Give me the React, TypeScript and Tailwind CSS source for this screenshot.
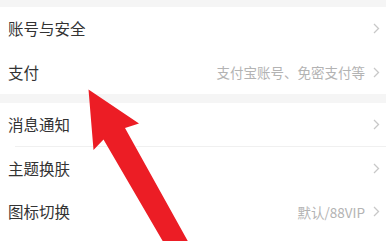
import React from "react";

const Chevron = () => (
  <svg width="7" height="11" viewBox="0 0 7 11" className="shrink-0">
    <path d="M1 1 L5.5 5.5 L1 10" fill="none" stroke="#c8c8c8" strokeWidth="1.3" />
  </svg>
);

type RowProps = { title: string; sub?: string; line?: boolean };

const Row = ({ title, sub, line }: RowProps) => (
  <div className="relative flex h-[43.5px] items-center pl-[8px] pr-[6px]">
    <span className="flex-1 text-[15.5px] text-[#333333]">{title}</span>
    {sub && <span className="mr-[8px] text-[13.5px] text-[#b3b3b3]">{sub}</span>}
    <Chevron />
    {line && <div className="absolute bottom-0 left-[15px] right-0 h-px bg-[#f0f0f0]" />}
  </div>
);

export default function App() {
  return (
    <div
      className="relative h-[241px] w-[386px] overflow-hidden bg-[#f5f5f5]"
      style={{ fontFamily: '"Noto Sans CJK SC", "Noto Sans", sans-serif' }}
    >
      <div className="h-[7px]" />
      <div className="bg-white">
        <Row title="账号与安全" />
        <Row title="支付" sub="支付宝账号、免密支付等" />
      </div>
      <div className="h-[9px]" />
      <div className="bg-white">
        <Row title="消息通知" line />
        <Row title="主题换肤" />
        <Row title="图标切换" sub="默认/88VIP" />
        <div className="h-[20px]" />
      </div>
      <svg className="pointer-events-none absolute left-0 top-0" width="386" height="241" viewBox="0 0 386 241">
        <polygon
          points="88.5,89.5 139,123.5 125,128 190,245 165,245 103.5,139.5 93.5,150"
          fill="#ec1d25"
        />
      </svg>
    </div>
  );
}
